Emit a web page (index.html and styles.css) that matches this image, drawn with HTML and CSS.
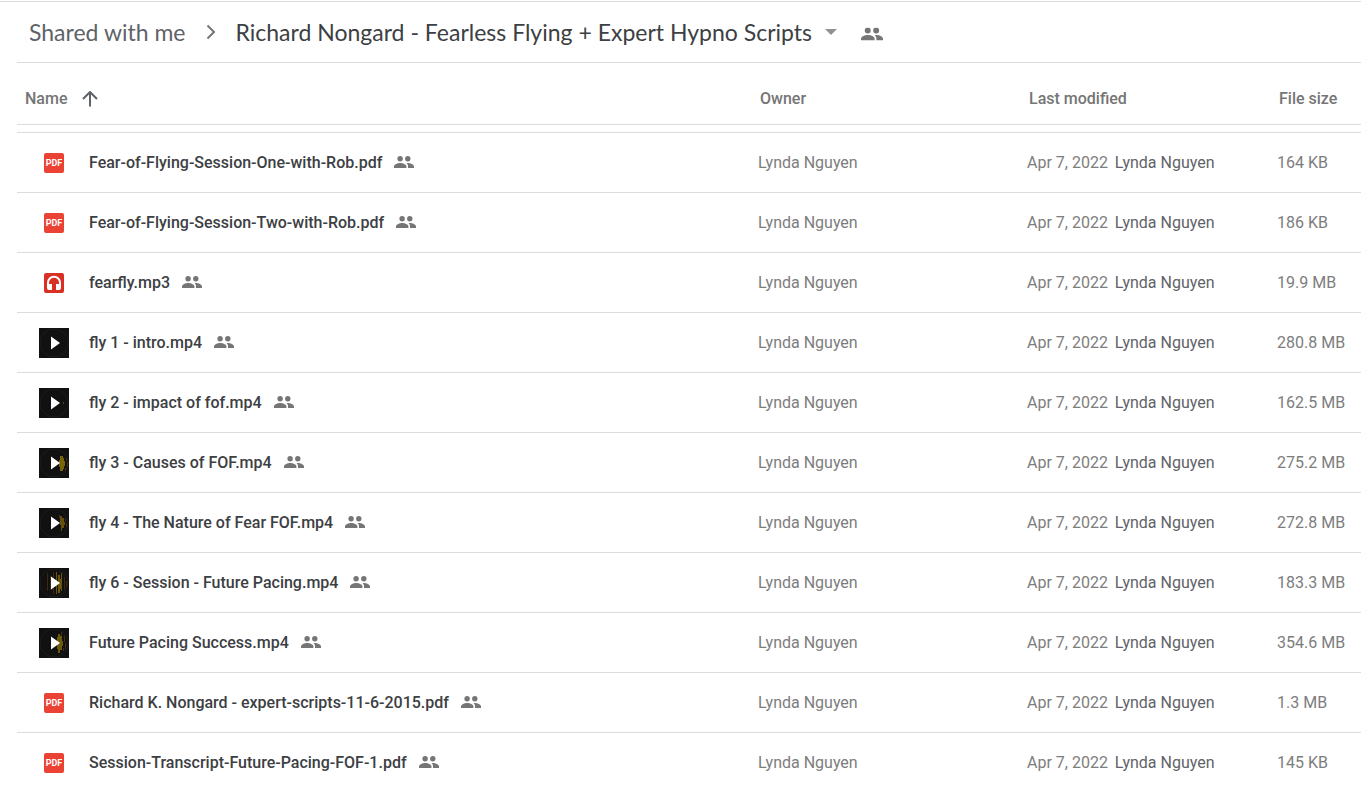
FILE: index.html
```html
<!DOCTYPE html>
<html lang="en">
<head>
  <meta charset="UTF-8" />
  <meta name="viewport" content="width=device-width, initial-scale=1.0"/>
  <title>Richard Nongard - Fearless Flying + Expert Hypno Scripts</title>
  <link rel="stylesheet" href="styles.css">
</head>
<body>

  <!-- Shared icons -->
  <svg class="sprite" aria-hidden="true">
    <symbol id="people" viewBox="0 0 20 12">
      <circle cx="6.1" cy="2.8" r="2.7"/>
      <circle cx="13.8" cy="2.8" r="2.7"/>
      <path d="M0 12v-1.600C0 8.300 3.700 7 6.200 7s6.200 1.300 6.200 3.400V12z"/>
      <path d="M12.600 7.100c.4-.1.800-.1 1.200-.1 2.500 0 6.200 1.300 6.200 3.400V12h-6v-1.600c0-1.400-.5-2.400-1.400-3.300z"/>
    </symbol>
    <symbol id="audio" viewBox="0 0 20 20">
      <rect width="20" height="20" rx="2" fill="#d93025"/>
      <path d="M4 13V9.800a6 6 0 0 1 12 0V13" fill="none" stroke="#fff" stroke-width="2"/>
      <path d="M3 11h5v6H5a2 2 0 0 1-2-2zM12 11h5v4a2 2 0 0 1-2 2h-3z" fill="#fff"/>
    </symbol>
    <symbol id="video" viewBox="0 0 30 30">
      <circle cx="15" cy="15" r="14" fill="none" stroke="#1c1c1c"/>
    </symbol>
    <symbol id="play" viewBox="0 0 30 30">
      <path d="M12 8.500v13l9-6.500z" fill="#fff"/>
    </symbol>
  </svg>

  <main class="drive">
    <!-- Breadcrumb -->
    <nav class="breadcrumb" aria-label="Folder path">
      <a class="crumb" href="#">Shared with me</a>
      <svg class="chevron" viewBox="0 0 10 16" aria-hidden="true"><path d="M1.500 1.500L8 8l-6.500 6.500"/></svg>
      <button class="current" type="button">
        Richard Nongard - Fearless Flying + Expert Hypno Scripts
        <svg class="caret" viewBox="0 0 12 6" aria-hidden="true"><path d="M0 0h12L6 6z"/></svg>
      </button>
      <button class="members" type="button" aria-label="Manage members"><svg viewBox="0 0 20 12"><use href="#people"/></svg></button>
    </nav>

    <!-- File list -->
    <table class="files">
      <colgroup>
        <col>
        <col class="col-owner">
        <col class="col-modified">
        <col class="col-size">
      </colgroup>
      <thead>
        <tr>
          <th class="sorted">
            <button class="sort" type="button">Name
              <svg class="arrow" viewBox="0 0 16 16" aria-hidden="true"><path d="M8 15.500V1.500M1 8l7-7 7 7"/></svg>
            </button>
          </th>
          <th>Owner</th>
          <th>Last modified</th>
          <th>File size</th>
        </tr>
      </thead>
      <tbody>
        <tr class="edge"><td colspan="4"></td></tr>
        <tr>
          <td><div class="file"><span class="icon"><span class="pdf">PDF</span></span><span class="name">Fear-of-Flying-Session-One-with-Rob.pdf</span><svg class="shared"><use href="#people"/></svg></div></td>
          <td>Lynda Nguyen</td>
          <td>Apr 7, 2022 <span class="by">Lynda Nguyen</span></td>
          <td>164 KB</td>
        </tr>
        <tr>
          <td><div class="file"><span class="icon"><span class="pdf">PDF</span></span><span class="name">Fear-of-Flying-Session-Two-with-Rob.pdf</span><svg class="shared"><use href="#people"/></svg></div></td>
          <td>Lynda Nguyen</td>
          <td>Apr 7, 2022 <span class="by">Lynda Nguyen</span></td>
          <td>186 KB</td>
        </tr>
        <tr>
          <td><div class="file"><span class="icon"><svg class="audio"><use href="#audio"/></svg></span><span class="name">fearfly.mp3</span><svg class="shared"><use href="#people"/></svg></div></td>
          <td>Lynda Nguyen</td>
          <td>Apr 7, 2022 <span class="by">Lynda Nguyen</span></td>
          <td>19.9 MB</td>
        </tr>
        <tr>
          <td><div class="file"><svg class="thumb" viewBox="0 0 30 30"><use href="#video"/><use href="#play"/></svg><span class="name">fly 1 - intro.mp4</span><svg class="shared"><use href="#people"/></svg></div></td>
          <td>Lynda Nguyen</td>
          <td>Apr 7, 2022 <span class="by">Lynda Nguyen</span></td>
          <td>280.8 MB</td>
        </tr>
        <tr>
          <td><div class="file"><svg class="thumb" viewBox="0 0 30 30"><use href="#video"/><path d="M24 14h1v2h-1z" fill="#5b430e"/><use href="#play"/></svg><span class="name">fly 2 - impact of fof.mp4</span><svg class="shared"><use href="#people"/></svg></div></td>
          <td>Lynda Nguyen</td>
          <td>Apr 7, 2022 <span class="by">Lynda Nguyen</span></td>
          <td>162.5 MB</td>
        </tr>
        <tr>
          <td><div class="file"><svg class="thumb" viewBox="0 0 30 30"><use href="#video"/><path d="M21 8h3v2h1v3h1v5h-1v3h-1v2h-3v-4h-1v-7h1z" fill="#7a6408"/><path d="M27 10h1v3h-1zM28 14h1v5h-1zM26 20h1v3h-1z" fill="#4a3109"/><use href="#play"/></svg><span class="name">fly 3 - Causes of FOF.mp4</span><svg class="shared"><use href="#people"/></svg></div></td>
          <td>Lynda Nguyen</td>
          <td>Apr 7, 2022 <span class="by">Lynda Nguyen</span></td>
          <td>275.2 MB</td>
        </tr>
        <tr>
          <td><div class="file"><svg class="thumb" viewBox="0 0 30 30"><use href="#video"/><path d="M21 8h2v2h2v4h1v3h-1v3h-2v3h-1v-6h-1z" fill="#66500a"/><path d="M26 10h1v4h-1zM27 15h1v4h-1zM20 7h1v3h-1z" fill="#442d0a"/><use href="#play"/></svg><span class="name">fly 4 - The Nature of Fear FOF.mp4</span><svg class="shared"><use href="#people"/></svg></div></td>
          <td>Lynda Nguyen</td>
          <td>Apr 7, 2022 <span class="by">Lynda Nguyen</span></td>
          <td>272.8 MB</td>
        </tr>
        <tr>
          <td><div class="file"><svg class="thumb" viewBox="0 0 30 30"><use href="#video"/><path d="M8 5h1v18H8zM11 8h1v14h-1zM14 4h1v22h-1zM25 9h1v13h-1zM27 13h1v6h-1z" fill="#3d290b"/><path d="M17 4h1v22h-1zM19 7h2v4h1v10h-1v4h-2zM22 5h1v18h-1z" fill="#6b560a"/><use href="#play"/></svg><span class="name">fly 6 - Session - Future Pacing.mp4</span><svg class="shared"><use href="#people"/></svg></div></td>
          <td>Lynda Nguyen</td>
          <td>Apr 7, 2022 <span class="by">Lynda Nguyen</span></td>
          <td>183.3 MB</td>
        </tr>
        <tr>
          <td><div class="file"><svg class="thumb" viewBox="0 0 30 30"><use href="#video"/><path d="M19 6h2v2h2v5h1v5h-1v4h-2v3h-2v-4h-1V9h1z" fill="#6e590a"/><path d="M22 4h1v4h-1zM25 8h1v6h-1zM26 15h1v6h-1zM24 20h1v3h-1z" fill="#442f0a"/><use href="#play"/></svg><span class="name">Future Pacing Success.mp4</span><svg class="shared"><use href="#people"/></svg></div></td>
          <td>Lynda Nguyen</td>
          <td>Apr 7, 2022 <span class="by">Lynda Nguyen</span></td>
          <td>354.6 MB</td>
        </tr>
        <tr>
          <td><div class="file"><span class="icon"><span class="pdf">PDF</span></span><span class="name">Richard K. Nongard - expert-scripts-11-6-2015.pdf</span><svg class="shared"><use href="#people"/></svg></div></td>
          <td>Lynda Nguyen</td>
          <td>Apr 7, 2022 <span class="by">Lynda Nguyen</span></td>
          <td>1.3 MB</td>
        </tr>
        <tr>
          <td><div class="file"><span class="icon"><span class="pdf">PDF</span></span><span class="name">Session-Transcript-Future-Pacing-FOF-1.pdf</span><svg class="shared"><use href="#people"/></svg></div></td>
          <td>Lynda Nguyen</td>
          <td>Apr 7, 2022 <span class="by">Lynda Nguyen</span></td>
          <td>145 KB</td>
        </tr>
      </tbody>
    </table>
  </main>

</body>
</html>
```
FILE: styles.css
```css
* {
  box-sizing: border-box;
}

body {
  margin: 0;
  padding-top: 1px;
  font-family: Roboto, Arial, sans-serif;
  font-size: 16px;
  background-color: #fff;
  color: #7d7d7d;
}

button {
  padding: 0;
  border: none;
  background: none;
  font: inherit;
  color: inherit;
  cursor: pointer;
}

.sprite {
  display: none;
}

.drive {
  padding-left: 17px;
  border-top: 1px solid #dadce0;
}

/* BREADCRUMB */
.breadcrumb {
  display: flex;
  align-items: center;
  height: 61px;
  padding-left: 12px;
  border-bottom: 1px solid #dadce0;
  font-family: "Google Sans", Lato, Roboto, sans-serif;
  font-size: 23px;
}

.crumb {
  color: #5f6368;
  text-decoration: none;
}

.chevron {
  width: 10px;
  height: 16px;
  margin: 0 20px;
  fill: none;
  stroke: #757575;
  stroke-width: 2;
}

.current {
  display: flex;
  align-items: center;
  gap: 13px;
  color: #3c4043;
}

.caret {
  width: 12px;
  height: 6px;
  fill: #919191;
}

.members {
  display: flex;
  margin: 4px 0 0 24px;
}

.members svg {
  width: 22px;
  height: 14px;
  fill: #757575;
}

/* FILE LIST */
.files {
  width: 100%;
  table-layout: fixed;
  border-collapse: separate;
  border-spacing: 0;
}

.col-owner {
  width: 269px;
}

.col-modified {
  width: 250px;
}

.col-size {
  width: 84px;
}

.files th {
  height: 62px;
  padding: 10px 0 0 2px;
  border-bottom: 1px solid #dadce0;
  color: #757575;
  font-weight: 500;
  text-align: left;
}

.files .sorted {
  padding-left: 8px;
}

.sort {
  display: flex;
  align-items: center;
  gap: 15px;
}

.arrow {
  width: 16px;
  height: 16px;
  fill: none;
  stroke: #5f6368;
  stroke-width: 2;
}

.files td {
  height: 60px;
  padding: 0;
  border-bottom: 1px solid #dadce0;
  white-space: nowrap;
}

/* bottom of the row scrolled under the header */
.files .edge td {
  height: 8px;
}

.file {
  display: flex;
  align-items: center;
  padding-left: 22px;
}

.icon {
  display: flex;
  justify-content: center;
  width: 30px;
}

.pdf {
  width: 20px;
  height: 20px;
  border-radius: 2px;
  background-color: #ea4335;
  color: #fff;
  font-size: 9px;
  font-weight: 700;
  line-height: 20px;
  text-align: center;
}

.audio {
  width: 20px;
  height: 20px;
}

.thumb {
  width: 30px;
  height: 30px;
  background-color: #111;
}

.name {
  margin-left: 20px;
  color: #3c4043;
  font-weight: 500;
}

.shared {
  width: 20px;
  height: 12px;
  margin: 0 0 2px 12px;
  fill: #757575;
}

.by {
  margin-left: 3px;
  color: #5f6368;
}
```
